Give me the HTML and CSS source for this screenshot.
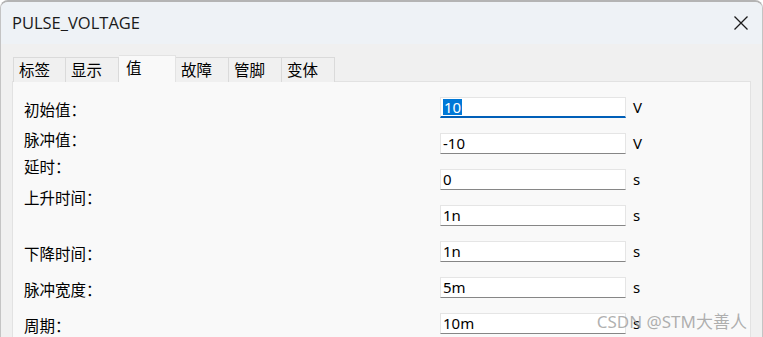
FILE: index.html
```html
<!DOCTYPE html>
<html lang="zh-CN">
<head>
<meta charset="utf-8">
<title>PULSE_VOLTAGE</title>
<link rel="stylesheet" href="styles.css">
</head>
<body>
<div class="window">
  <div class="titlebar">
    <span class="title">PULSE_VOLTAGE</span>
    <svg class="close" width="16" height="16" viewBox="0 0 16 16" aria-label="关闭">
      <path d="M1.5 1.5 L14.5 14.5 M14.5 1.5 L1.5 14.5" stroke="#1b1b1b" stroke-width="1.3" fill="none"/>
    </svg>
  </div>
  <div class="client">
    <div class="tabs">
      <div class="tab">标签</div>
      <div class="tab">显示</div>
      <div class="tab tab--active">值</div>
      <div class="tab">故障</div>
      <div class="tab">管脚</div>
      <div class="tab">变体</div>
    </div>
    <div class="panel">
      <div class="form">
        <div class="lbl lbl--down">初始值：</div>
        <div class="field field--focus"><span class="sel">10</span></div>
        <div class="unit">V</div>

        <div class="lbl lbl--up-s">脉冲值：</div>
        <div class="field">-10</div>
        <div class="unit">V</div>

        <div class="lbl lbl--up-m">延时：</div>
        <div class="field">0</div>
        <div class="unit">s</div>

        <div class="lbl lbl--up-l">上升时间：</div>
        <div class="field">1n</div>
        <div class="unit">s</div>

        <div class="lbl lbl--down">下降时间：</div>
        <div class="field">1n</div>
        <div class="unit">s</div>

        <div class="lbl lbl--down">脉冲宽度：</div>
        <div class="field">5m</div>
        <div class="unit">s</div>

        <div class="lbl lbl--down">周期：</div>
        <div class="field">10m</div>
        <div class="unit">s</div>
      </div>
    </div>
  </div>
  <div class="watermark">CSDN @STM大善人</div>
</div>
</body>
</html>
```
FILE: styles.css
```css
html, body {
  margin: 0;
  padding: 0;
  background: #ffffff;
}
body {
  width: 763px;
  height: 337px;
  overflow: hidden;
  font-family: "Noto Sans", "Noto Sans CJK SC", sans-serif;
}
.window {
  position: relative;
  box-sizing: border-box;
  width: 763px;
  height: 345px;
  border-top: 2px solid #b4b4b4;
  border-left: 1px solid #c4c4c4;
  border-right: 1px solid #c4c4c4;
  border-radius: 8px 8px 0 0;
  background: #f0f0f0;
  overflow: hidden;
}
.titlebar {
  height: 42px;
  background: #eef2f6;
  display: flex;
  align-items: center;
  justify-content: space-between;
  padding: 0 13px 0 11px;
}
.title {
  font-family: "Open Sans", "Noto Sans", sans-serif;
  font-size: 16.5px;
  color: #1a1a1a;
  margin-top: -2px;
}
.close {
  display: block;
}
.client {
  padding: 11px 0 0 11px;
}
.tabs {
  display: flex;
  align-items: flex-end;
  padding-left: 1px;
  height: 27px;
  position: relative;
  z-index: 1;
  margin-bottom: -1px;
}
.tab {
  box-sizing: border-box;
  width: 53px;
  height: 25px;
  border: 1px solid #dadada;
  border-bottom: none;
  border-left: none;
  background: #f0f0f0;
  font-family: "Noto Sans CJK SC", sans-serif;
  font-size: 15.5px;
  line-height: 23px;
  padding-left: 5px;
  color: #000;
}
.tab:first-child {
  border-left: 1px solid #dadada;
}
.tab--active {
  width: 57px;
  height: 27px;
  background: #f9f9f9;
  border-left: none;
  border-color: #e3e3e3;
  padding-left: 7px;
  line-height: 22px;
}
.panel {
  box-sizing: border-box;
  width: 739px;
  height: 300px;
  background: #f9f9f9;
  border: 1px solid #e2e2e2;
  padding: 15px 0 0 11px;
}
.form {
  display: grid;
  grid-template-columns: 416px 186px auto;
  grid-auto-rows: 21px;
  row-gap: 15px;
  align-items: start;
}
.lbl {
  font-family: "Noto Sans CJK SC", sans-serif;
  font-size: 15.5px;
  line-height: 20px;
  color: #000;
}
.lbl--down { margin-top: 2px; }
.lbl--up-s { margin-top: -4px; }
.lbl--up-m { margin-top: -13px; }
.lbl--up-l { margin-top: -18px; }
.field {
  box-sizing: border-box;
  height: 21px;
  background: #ffffff;
  border: 1px solid #e5e5e5;
  border-bottom: 1px solid #868686;
  padding-left: 2px;
  font-family: "Noto Sans", sans-serif;
  font-size: 15px;
  line-height: 19px;
  color: #000;
}
.field--focus {
  border-bottom: 2px solid #005fb8;
  line-height: 18px;
}
.sel {
  display: inline-block;
  background: #0078d7;
  color: #ffffff;
  line-height: 16px;
  padding: 0 1px;
}
.unit {
  padding-left: 7px;
  font-family: "Noto Sans", sans-serif;
  font-size: 15px;
  line-height: 21px;
  color: #000;
}
.watermark {
  position: absolute;
  right: 15px;
  top: 306px;
  font-family: "Noto Sans", "Noto Sans CJK SC", sans-serif;
  font-size: 17px;
  color: rgba(150, 150, 150, 0.75);
  white-space: nowrap;
}
```
